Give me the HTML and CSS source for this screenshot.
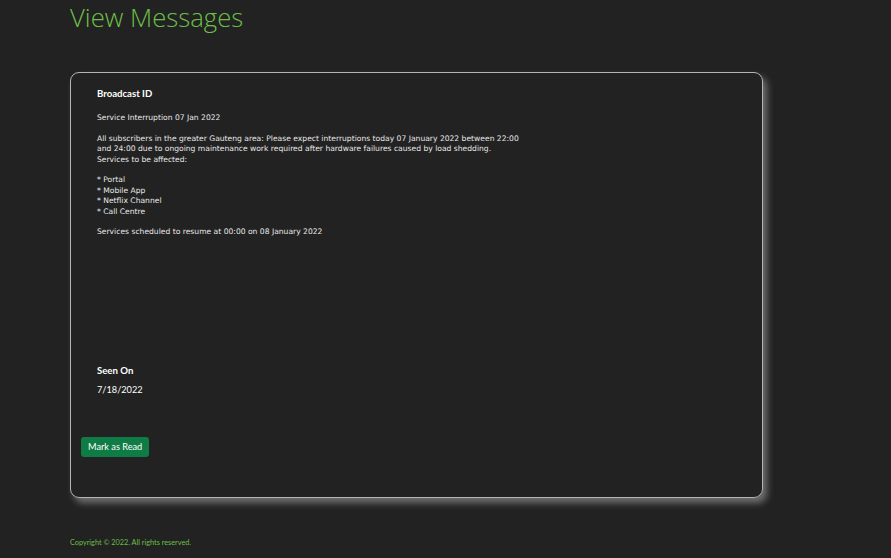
FILE: index.html
```html
<!DOCTYPE HTML>
<html>
    <head>
        <meta charset='utf-8'/>
        <title>View Messages</title>
        <link rel="stylesheet" href="styles.css">
    </head>
    <body>
        <div class="page">
            <h1 class="title">View Messages</h1>
            <div class="card">
                <div class="field">
                    <div class="label">Broadcast ID</div>
                    <div class="message">Service Interruption 07 Jan 2022

All subscribers in the greater Gauteng area: Please expect interruptions today 07 January 2022 between 22:00
and 24:00 due to ongoing maintenance work required after hardware failures caused by load shedding.
Services to be affected:

* Portal
* Mobile App
* Netflix Channel
* Call Centre

Services scheduled to resume at 00:00 on 08 January 2022</div>
                </div>
                <div class="field">
                    <div class="label">Seen On</div>
                    <div class="date">7/18/2022</div>
                </div>
                <button class="btn-read">Mark as Read</button>
            </div>
            <div class="footer">Copyright &copy; 2022. All rights reserved.</div>
        </div>
    </body>
</html>
```

FILE: styles.css
```css
html, body{
    margin: 0;
    background: #222222;
}
body{
    font-family: Lato, "Open Sans", sans-serif;
    color: #ffffff;
}
.page{
    padding: 0 0 0 70px;
    width: 693px;
}
.title{
    margin: 0;
    font-family: "Open Sans", sans-serif;
    font-weight: 300;
    font-size: 25.7px;
    line-height: 36px;
    color: #6cbf48;
}
.card{
    margin: 36px 0 0 0;
    height: 404px;
    padding: 10px 10px 10px 10px;
    border: 1px solid #b5b5b5;
    border-radius: 9px;
    box-shadow: 4px 5px 7px #707070;
    display: flex;
    flex-direction: column;
}
.field{
    padding-left: 16px;
}
.label{
    font-weight: 700;
    font-size: 9.6px;
    line-height: 14px;
    margin-top: 4px;
}
.message{
    margin-top: 12px;
    white-space: pre-line;
    font-family: "DejaVu Sans", sans-serif;
    font-size: 7.6px;
    line-height: 10.4px;
    height: 247px;
    color: #e8e8e8;
}
.date{
    margin-top: 5px;
    font-size: 9.2px;
    line-height: 14px;
}
.btn-read{
    margin-top: 40px;
    align-self: flex-start;
    background: #0f7b45;
    color: #ffffff;
    border: none;
    border-radius: 3px;
    font-family: Lato, sans-serif;
    font-size: 9.2px;
    line-height: 14px;
    padding: 3px 7px;
}
.footer{
    margin-top: 40px;
    font-size: 7.3px;
    color: #6cbf48;
}
```
